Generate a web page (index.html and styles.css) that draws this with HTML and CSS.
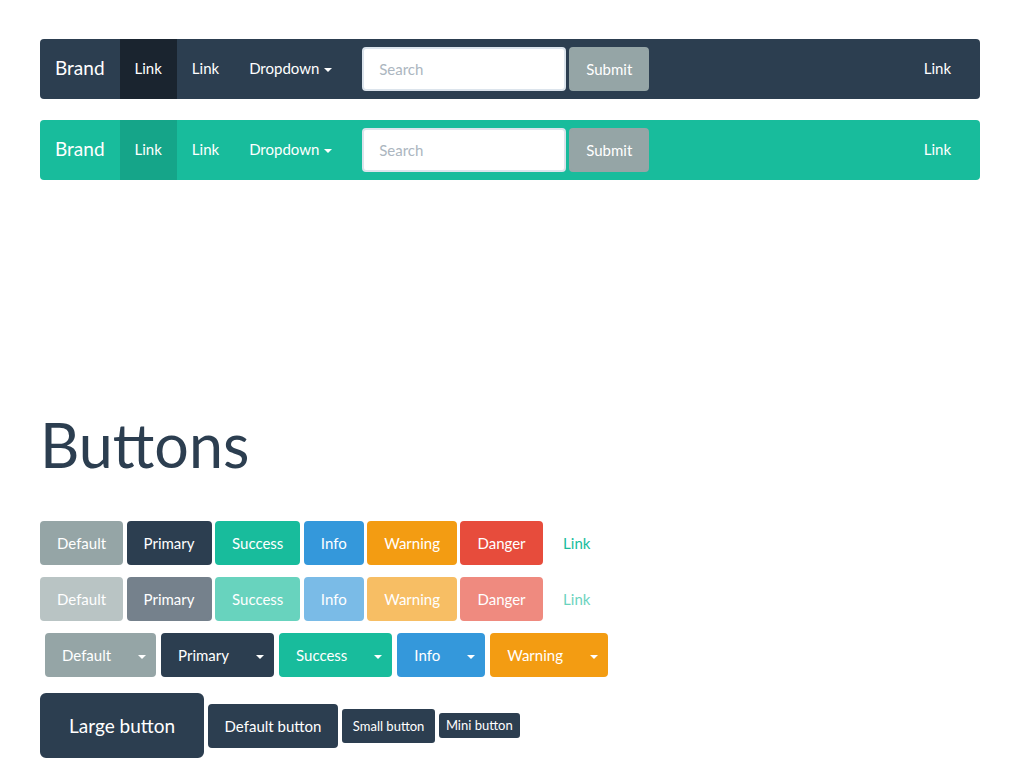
FILE: index.html
```html
<!DOCTYPE html>
<html lang="en">
<head>
    <meta charset="UTF-8">
    <meta name="viewport" content="width=device-width, initial-scale=1.0">
    <title>Buttons</title>
    <link rel="stylesheet" href="styles.css">
</head>
<body>
    <div class="page">

        <!-- dark navbar -->
        <nav class="navbar navbar-dark">
            <a class="brand">Brand</a>
            <ul class="nav">
                <li class="active"><a>Link</a></li>
                <li><a>Link</a></li>
                <li><a>Dropdown <span class="caret"></span></a></li>
            </ul>
            <form class="navbar-form">
                <input class="form-control" type="text" placeholder="Search">
                <button class="btn btn-default" type="button">Submit</button>
            </form>
            <ul class="nav nav-right">
                <li><a>Link</a></li>
            </ul>
        </nav>

        <!-- green navbar -->
        <nav class="navbar navbar-green">
            <a class="brand">Brand</a>
            <ul class="nav">
                <li class="active"><a>Link</a></li>
                <li><a>Link</a></li>
                <li><a>Dropdown <span class="caret"></span></a></li>
            </ul>
            <form class="navbar-form">
                <input class="form-control" type="text" placeholder="Search">
                <button class="btn btn-default" type="button">Submit</button>
            </form>
            <ul class="nav nav-right">
                <li><a>Link</a></li>
            </ul>
        </nav>

        <h1 class="title">Buttons</h1>

        <div class="btn-row">
            <button class="btn btn-default">Default</button>
            <button class="btn btn-primary">Primary</button>
            <button class="btn btn-success">Success</button>
            <button class="btn btn-info">Info</button>
            <button class="btn btn-warning">Warning</button>
            <button class="btn btn-danger">Danger</button>
            <button class="btn btn-link">Link</button>
        </div>

        <div class="btn-row disabled">
            <button class="btn btn-default">Default</button>
            <button class="btn btn-primary">Primary</button>
            <button class="btn btn-success">Success</button>
            <button class="btn btn-info">Info</button>
            <button class="btn btn-warning">Warning</button>
            <button class="btn btn-danger">Danger</button>
            <button class="btn btn-link">Link</button>
        </div>

        <div class="btn-row groups">
            <div class="btn-group">
                <button class="btn btn-default">Default</button>
                <button class="btn btn-default toggle"><span class="caret"></span></button>
            </div>
            <div class="btn-group">
                <button class="btn btn-primary">Primary</button>
                <button class="btn btn-primary toggle"><span class="caret"></span></button>
            </div>
            <div class="btn-group">
                <button class="btn btn-success">Success</button>
                <button class="btn btn-success toggle"><span class="caret"></span></button>
            </div>
            <div class="btn-group">
                <button class="btn btn-info">Info</button>
                <button class="btn btn-info toggle"><span class="caret"></span></button>
            </div>
            <div class="btn-group">
                <button class="btn btn-warning">Warning</button>
                <button class="btn btn-warning toggle"><span class="caret"></span></button>
            </div>
        </div>

        <div class="btn-row sizes">
            <button class="btn btn-primary btn-lg">Large button</button>
            <button class="btn btn-primary">Default button</button>
            <button class="btn btn-primary btn-sm">Small button</button>
            <button class="btn btn-primary btn-xs">Mini button</button>
        </div>

    </div>
</body>
</html>
```

FILE: styles.css
```css
html {
    font-family: Lato, "Open Sans", sans-serif;
}

body {
    margin: 0;
    background-color: #ffffff;
    color: #2c3e50;
    font-size: 15px;
}

.page {
    padding: 39px 44px 0 40px;
}

/* navbars */
.navbar {
    display: flex;
    align-items: center;
    height: 60px;
    border-radius: 4px;
    margin-bottom: 21px;
}

.navbar-dark {
    background-color: #2c3e50;
}

.navbar-green {
    background-color: #18bc9c;
}

.brand {
    padding: 0 15px;
    line-height: 58px;
    height: 60px;
    font-size: 19px;
    color: #ffffff;
}

.nav {
    display: flex;
    list-style: none;
    margin: 0;
    padding: 0;
    height: 60px;
}

.nav li a {
    display: block;
    padding: 0 15px;
    line-height: 59px;
    height: 60px;
    color: #ffffff;
}

.navbar-dark .nav li.active a {
    background-color: #1a242f;
}

.navbar-green .nav li.active a {
    background-color: #15a589;
}

.nav-right {
    margin-left: auto;
    margin-right: 14px;
}

.caret {
    display: inline-block;
    width: 0;
    height: 0;
    margin-left: 1px;
    vertical-align: middle;
    border-top: 4px solid;
    border-left: 4px solid transparent;
    border-right: 4px solid transparent;
}

.navbar-form {
    display: flex;
    gap: 3px;
    margin: 0 0 0 15px;
}

.form-control {
    box-sizing: border-box;
    width: 204px;
    height: 44px;
    padding: 0 15px;
    border: 2px solid #dce4ec;
    border-radius: 4px;
    font-family: inherit;
    font-size: 15px;
    color: #2c3e50;
    background-color: #ffffff;
}

.form-control::placeholder {
    color: #acb6c0;
}

/* heading */
.title {
    margin: 231px 0 43px;
    font-size: 61px;
    font-weight: 400;
    line-height: 67px;
    color: #2c3e50;
}

/* buttons */
.btn-row {
    display: flex;
    gap: 3.5px;
    margin-bottom: 12px;
}

.btn {
    font-family: inherit;
    font-size: 15px;
    line-height: 20px;
    padding: 10px 15px;
    border: 2px solid transparent;
    border-radius: 4px;
    color: #ffffff;
    cursor: pointer;
}

.btn-default { background-color: #95a5a6; border-color: #95a5a6; }
.btn-primary { background-color: #2c3e50; border-color: #2c3e50; }
.btn-success { background-color: #18bc9c; border-color: #18bc9c; }
.btn-info    { background-color: #3498db; border-color: #3498db; }
.btn-warning { background-color: #f39c12; border-color: #f39c12; }
.btn-danger  { background-color: #e74c3c; border-color: #e74c3c; }

.btn-link {
    background: none;
    color: #18bc9c;
}

.disabled .btn {
    opacity: 0.65;
    cursor: not-allowed;
}

.groups {
    gap: 5px;
    padding-left: 5px;
    margin-bottom: 16px;
}

.btn-group {
    display: flex;
}

.btn-group .btn:first-child {
    border-top-right-radius: 0;
    border-bottom-right-radius: 0;
}

.btn-group .toggle {
    padding: 10px 8px;
    border-top-left-radius: 0;
    border-bottom-left-radius: 0;
}

.btn-group .toggle .caret {
    margin: 0;
}

.sizes {
    align-items: center;
    gap: 3.5px;
}

.btn-lg {
    font-size: 19px;
    line-height: 25px;
    padding: 18px 27px;
    border-radius: 6px;
}

.btn-sm {
    font-size: 13px;
    line-height: 18px;
    padding: 6px 9px;
    border-radius: 3px;
}

.btn-xs {
    font-size: 13px;
    line-height: 19px;
    padding: 1px 5px;
    border-radius: 3px;
}
```
